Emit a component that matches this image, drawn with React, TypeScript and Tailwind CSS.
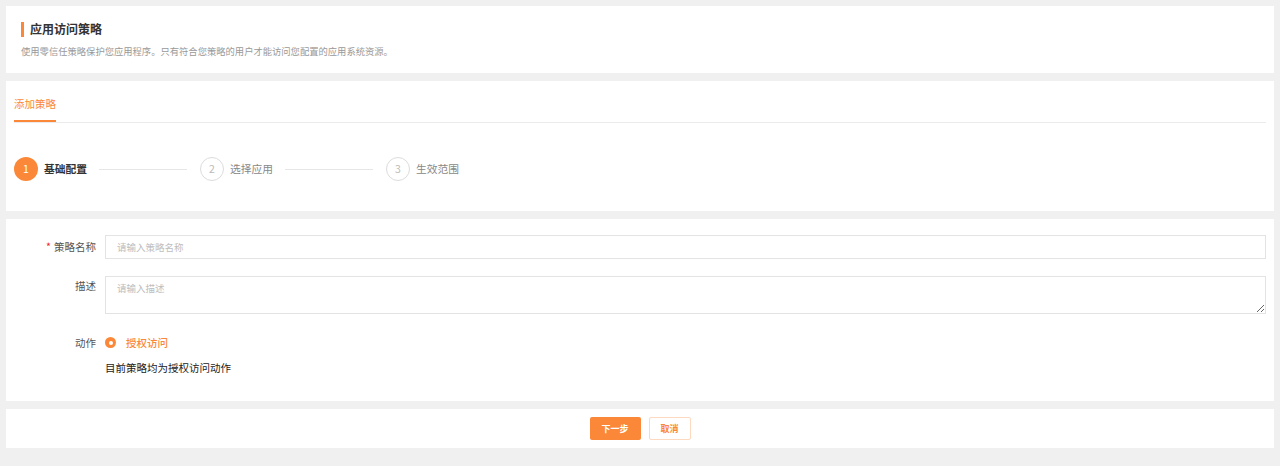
import React from "react"

const font = { fontFamily: '"Noto Sans CJK SC", "Noto Sans", sans-serif' }

const steps = [
    { n: 1, label: "基础配置", active: true },
    { n: 2, label: "选择应用", active: false },
    { n: 3, label: "生效范围", active: false },
]

const Steps = () => (
    <div className="flex items-center mt-[34px]">
        {steps.map((s, i) => (
            <div key={s.n} className="flex items-center">
                <div className={s.active
                    ? "w-[24px] h-[24px] rounded-full bg-[#fb8838] text-white flex items-center justify-center text-[10.5px]"
                    : "w-[24px] h-[24px] rounded-full border border-[#dcdcdc] text-[#bbbbbb] flex items-center justify-center text-[10.5px]"}>
                    {s.n}
                </div>
                <span className={s.active
                    ? "ml-[6px] text-[10.75px] font-bold text-[#333333]"
                    : "ml-[6px] text-[10.75px] text-[#888888]"}>
                    {s.label}
                </span>
                {i < steps.length - 1 && <div className="ml-[12px] mr-[13px] w-[88px] h-px bg-[#e6e6e6]" />}
            </div>
        ))}
    </div>
)

export default function App() {
    return (
        <div style={font} className="bg-[#f0f0f0] min-h-[466px] p-[6px] flex flex-col gap-[8px]">
            <div className="bg-white h-[67px] px-[15px] pt-[15px]">
                <div className="flex items-center h-[16px]">
                    <div className="w-[3px] h-[15px] bg-[#fb8838]" />
                    <span className="ml-[6px] text-[12px] font-bold text-[#333333] leading-[16px]">应用访问策略</span>
                </div>
                <div className="mt-[7px] text-[9.3px] text-[#999999] leading-[14px]">
                    使用零信任策略保护您应用程序。只有符合您策略的用户才能访问您配置的应用系统资源。
                </div>
            </div>

            <div className="bg-white h-[130px] px-[8px]">
                <div className="flex border-b border-[#ebebeb] pt-[15px]">
                    <div className="border-b-2 border-[#fb8838] pb-[8px] text-[10.5px] leading-[16px] text-[#fb8838]">
                        添加策略
                    </div>
                </div>
                <Steps />
            </div>

            <div className="bg-white h-[182px] pt-[16px] pr-[8px] text-[10.5px]">
                <div className="flex items-center">
                    <label className="w-[90px] text-right text-[#555555]">
                        <span className="text-[#f5222d] mr-[3px]">*</span>策略名称
                    </label>
                    <input
                        placeholder="请输入策略名称"
                        className="ml-[9px] flex-1 h-[24px] border border-[#e3e3e3] px-[11px] text-[9.5px] outline-none placeholder:text-[#bdbdbd]"
                    />
                </div>
                <div className="flex items-start mt-[17px]">
                    <label className="w-[90px] text-right text-[#555555] leading-[20px]">描述</label>
                    <textarea
                        placeholder="请输入描述"
                        className="ml-[9px] flex-1 h-[38px] border border-[#e3e3e3] px-[11px] pt-[4px] text-[9.5px] outline-none placeholder:text-[#bdbdbd] resize-y block"
                    />
                </div>
                <div className="flex items-center mt-[21px]">
                    <label className="w-[90px] text-right text-[#555555]">动作</label>
                    <div className="ml-[9px] flex items-center">
                        <span className="w-[11px] h-[11px] rounded-full bg-[#fb8838] flex items-center justify-center">
                            <span className="w-[4px] h-[4px] rounded-full bg-white" />
                        </span>
                        <span className="ml-[10px] text-[#fb8838] font-medium">授权访问</span>
                    </div>
                </div>
                <div className="ml-[99px] mt-[9px] text-[#222222]">目前策略均为授权访问动作</div>
            </div>

            <div className="bg-white h-[39px] flex justify-center items-start pt-[8px] gap-[8px]">
                <button className="w-[51px] h-[23px] bg-[#fb8838] text-white text-[9px] font-bold rounded-[2px]">下一步</button>
                <button className="w-[42px] h-[23px] border border-[#fdd9bf] text-[#fb8838] text-[9px] font-bold rounded-[2px]">取消</button>
            </div>
        </div>
    )
}
